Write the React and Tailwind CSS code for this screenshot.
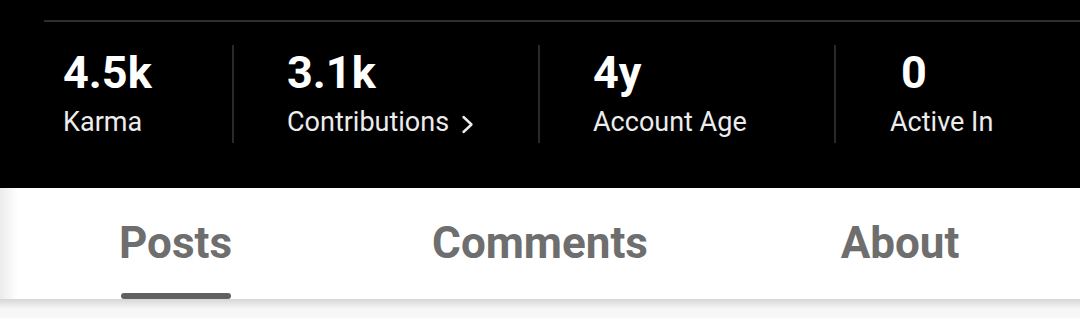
import React from 'react';

const stats = [
    { value: '4.5k', label: 'Karma', width: 'w-[232px]', pad: 'pl-[63px]' },
    { value: '3.1k', label: 'Contributions', width: 'w-[304px]', pad: 'pl-[53px]', chevron: true },
    { value: '4y', label: 'Account Age', width: 'w-[294px]', pad: 'pl-[53px]' },
    { value: '0', label: 'Active In', width: 'flex-1', pad: 'pl-[54px]', valuePad: 'pl-[11px]' },
];

const tabs = ['Posts', 'Comments', 'About'];

const Chevron = () => (
    <svg width="13" height="19" viewBox="0 0 13 19" className="ml-[12px] mt-[3px]" fill="none">
        <polyline points="2.5,2 10.5,9.5 2.5,17" stroke="#ececec" strokeWidth="2.4" strokeLinecap="round" strokeLinejoin="round" />
    </svg>
);

const App = () => {
    return (
        <div className="w-[1080px] h-[318px] overflow-hidden bg-[#f7f7f7] font-['Roboto',sans-serif]">
            <div className="bg-black h-[188px] pt-[20px]">
                <div className="ml-[44px] h-[2px] bg-[#2e2e2e]" />
                <div className="flex mt-[23px] h-[98px]">
                    {stats.map((s, i) => (
                        <React.Fragment key={s.label}>
                            {i > 0 && <div className="w-[2px] h-full bg-[#2a2a2a]" />}
                            <div className={`${s.width} ${s.pad} pt-[5px]`}>
                                <div className={`${s.valuePad || ''} text-[45px] leading-none font-bold text-white`}>{s.value}</div>
                                <div className="mt-[14px] flex items-center text-[27px] leading-none text-[#ececec]">
                                    {s.label}
                                    {s.chevron && <Chevron />}
                                </div>
                            </div>
                        </React.Fragment>
                    ))}
                </div>
            </div>
            <div className="h-[111px] grid grid-cols-3 bg-[linear-gradient(to_right,#ececec,#ffffff_18px)]">
                {tabs.map((t, i) => (
                    <div key={t} className={`flex flex-col items-center pt-[33px] ${i === 0 ? 'pr-[9px]' : ''}`}>
                        <div className="text-[44px] leading-none font-bold text-[#6e6e6e]">{t}</div>
                        {i === 0 && <div className="mt-[28px] w-[110px] h-[6px] rounded-full bg-[#606060]" />}
                    </div>
                ))}
            </div>
            <div className="h-[10px] bg-gradient-to-b from-[#d6d6d6] to-[#f7f7f7]" />
        </div>
    );
};

export default App;
